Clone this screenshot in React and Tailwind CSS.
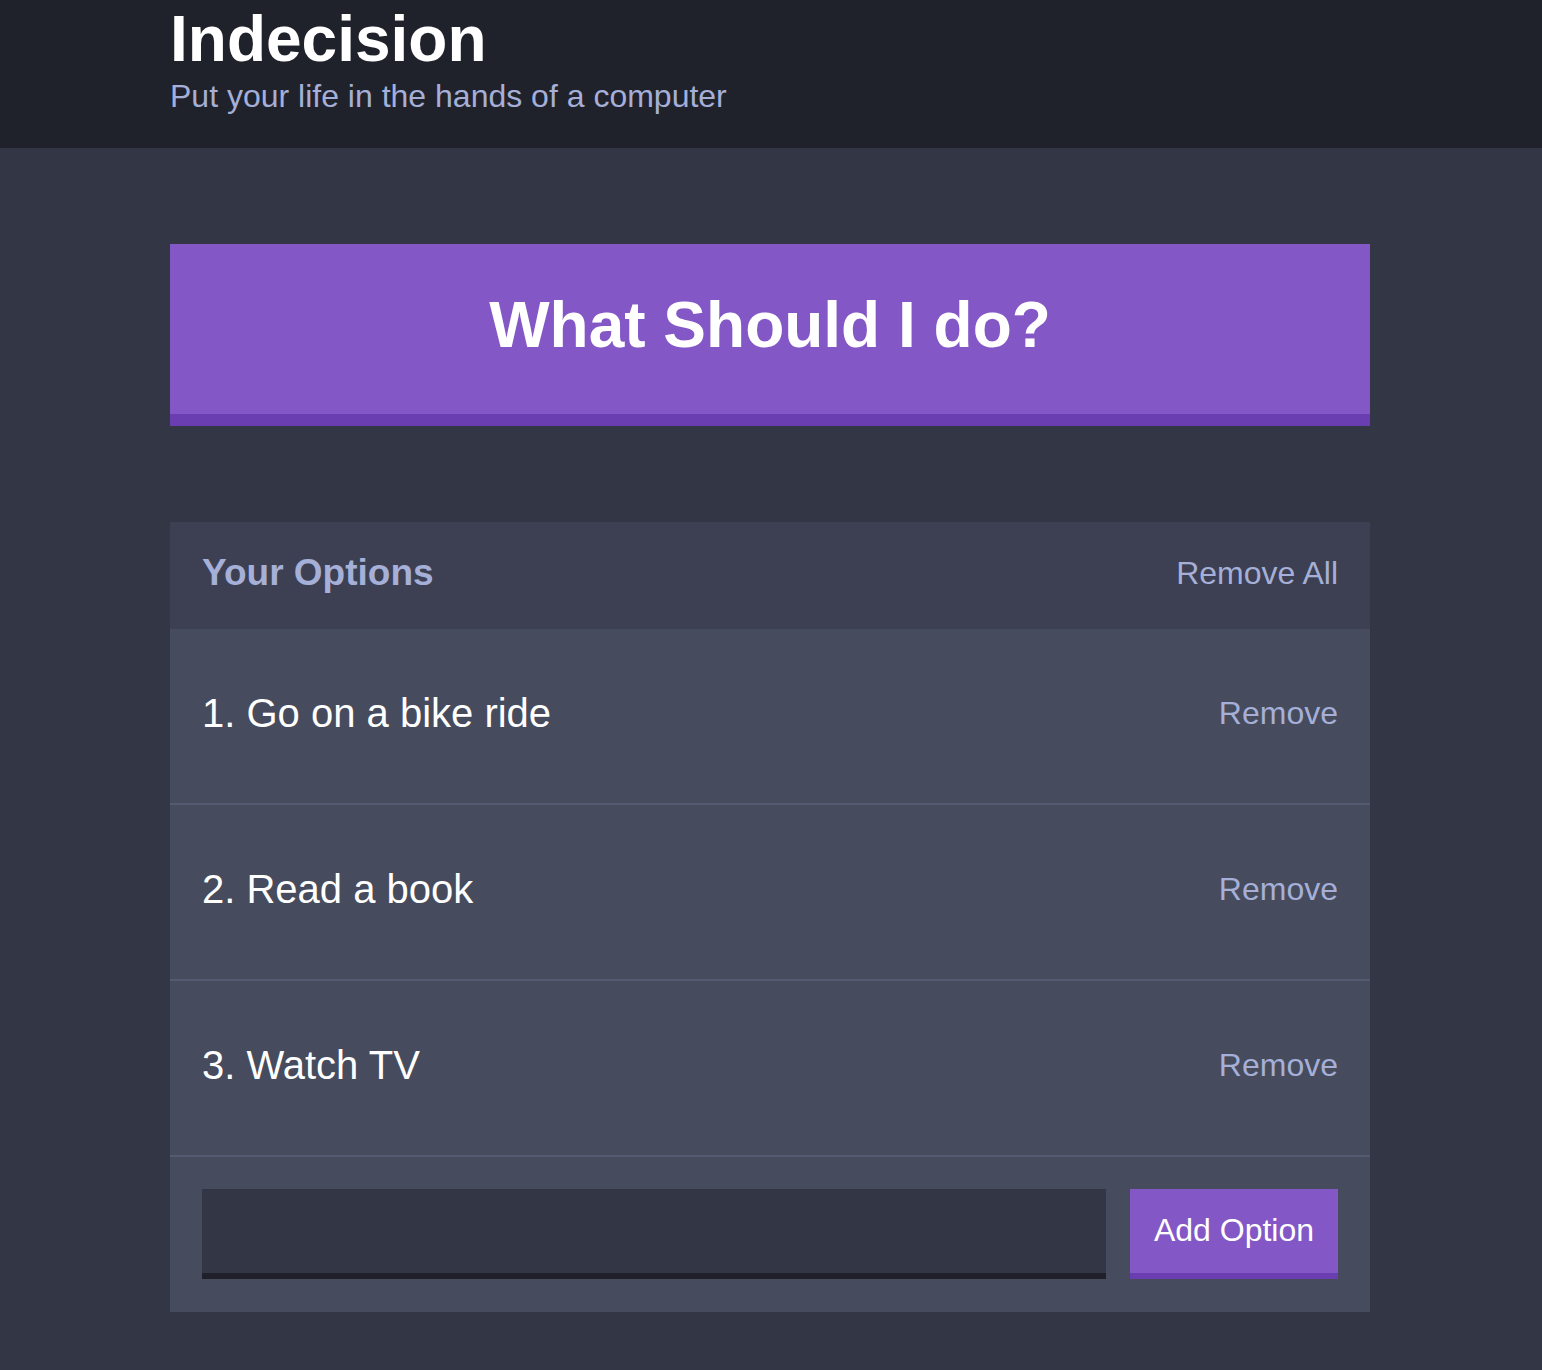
import React, { useState } from 'react';

const Header = () => (
    <header className="bg-[#20222b] pt-[7px] pb-[36px] pr-[2px]">
        <div className="max-w-[1200px] mx-auto">
            <h1 className="text-[64px] leading-[64px] font-bold text-white">Indecision</h1>
            <h2 className="mt-[9px] text-[32px] leading-[32px] text-[#a5afd7]">Put your life in the hands of a computer</h2>
        </div>
    </header>
);

const Option = ({ text, index, onRemove }) => (
    <div className="flex items-center justify-between h-[176px] px-8 pb-[6px] border-b-2 border-[#575b71]">
        <p className="text-[40px] text-white">{index}. {text}</p>
        <button onClick={onRemove} className="text-[32px] text-[#a5afd7]">
            Remove
        </button>
    </div>
);

export default function App() {
    const [options, setOptions] = useState(['Go on a bike ride', 'Read a book', 'Watch TV']);
    const [value, setValue] = useState('');

    return (
        <div className="min-h-screen bg-[#333645] font-['Liberation_Sans',Arial,sans-serif]">
            <Header />
            <div className="pr-[2px]">
                <div className="max-w-[1200px] mx-auto py-24">
                    {/* Action */}
                    <button className="w-full h-[182px] flex items-center justify-center pb-2 bg-[#8357c5] border-b-[12px] border-[#6a3eb0] text-white text-[64px] leading-[64px] font-bold">
                        What Should I do?
                    </button>

                    {/* Widget */}
                    <div className="mt-24 bg-[#464b5e]">
                        <div className="flex items-center justify-between h-[107px] px-8 pb-[5px] bg-[#3c4052]">
                            <h3 className="text-[37px] font-bold text-[#a5afd7]">Your Options</h3>
                            <button onClick={() => setOptions([])} className="text-[32px] text-[#a5afd7]">
                                Remove All
                            </button>
                        </div>
                        {options.map((opt, i) => (
                            <Option
                                key={opt}
                                text={opt}
                                index={i + 1}
                                onRemove={() => setOptions(prev => prev.filter(o => o !== opt))}
                            />
                        ))}
                        <form
                            onSubmit={(e) => {
                                e.preventDefault();
                                if (value.trim()) setOptions(prev => [...prev, value.trim()]);
                                setValue('');
                            }}
                            className="flex gap-6 px-8 pt-[32px] pb-[33px]"
                        >
                            <input
                                type="text"
                                value={value}
                                onChange={(e) => setValue(e.target.value)}
                                className="flex-1 min-w-0 h-[90px] bg-[#333645] border-b-[6px] border-[#1f2029] text-white text-[32px] px-4 outline-none"
                            />
                            <button
                                type="submit"
                                className="w-[208px] h-[90px] pb-[2px] bg-[#8357c5] border-b-[6px] border-[#6a3eb0] text-white text-[32px]"
                            >
                                Add Option
                            </button>
                        </form>
                    </div>
                </div>
            </div>
        </div>
    );
}
